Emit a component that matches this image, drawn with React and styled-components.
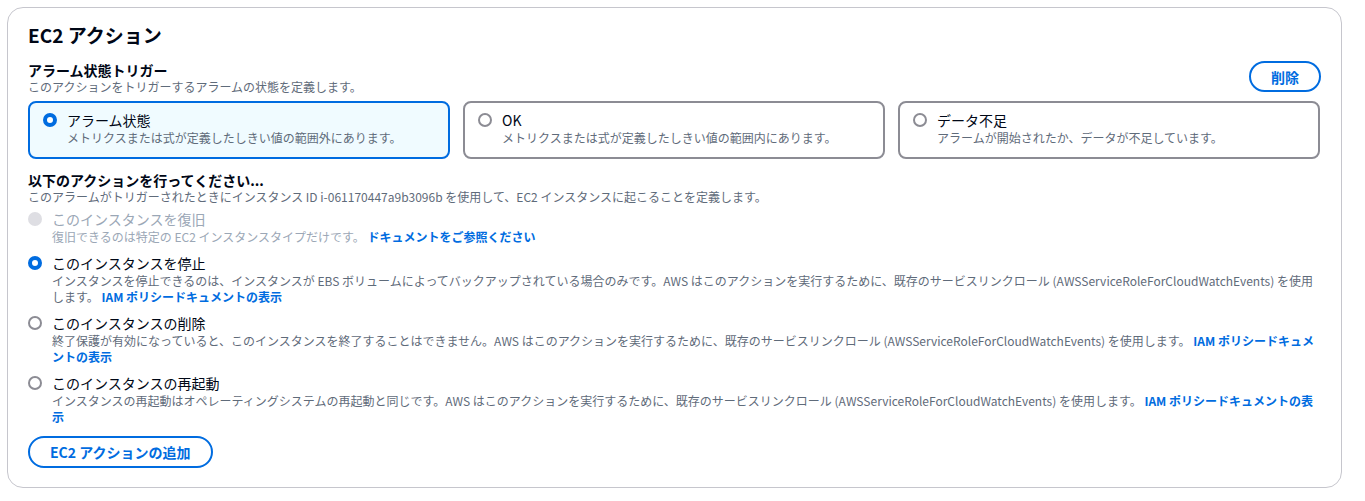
import React from "react";
import styled, { createGlobalStyle } from "styled-components";

const Global = createGlobalStyle`
  html, body { margin: 0; padding: 0; background: #ffffff; }
  body {
    font-family: "Noto Sans CJK JP", "Noto Sans", sans-serif;
    color: #000716;
    -webkit-font-smoothing: antialiased;
  }
`;

const Page = styled.div`
  padding: 7px 23px 12px 7px;
`;

const Card = styled.section`
  border: 1px solid #c6c6cd;
  border-radius: 16px;
  background: #fff;
  padding: 16px 20px 19px 20px;
`;

const Title = styled.h2`
  margin: 0;
  font-size: 19px;
  line-height: 22px;
  font-weight: 700;
`;

const SectionHead = styled.div`
  display: flex;
  align-items: flex-start;
  justify-content: space-between;
  margin-top: ${(p) => p.$mt || 0}px;
`;

const HeadText = styled.div`
  display: flex;
  flex-direction: column;
`;

const Label = styled.div`
  font-size: 14px;
  line-height: 18px;
  font-weight: 700;
`;

const Desc = styled.div`
  font-size: 12px;
  line-height: 16px;
  color: ${(p) => (p.$disabled ? "#9ba7b6" : "#5f6b7a")};
`;

const PillButton = styled.button`
  font-family: inherit;
  font-size: 14px;
  font-weight: 700;
  line-height: 18px;
  color: #006ce0;
  background: #fff;
  border: 2px solid #006ce0;
  border-radius: 20px;
  padding: 4px 20px;
  height: ${(p) => p.$h || 32}px;
  cursor: pointer;
`;

const Tiles = styled.div`
  display: grid;
  grid-template-columns: repeat(3, 1fr);
  gap: 13px;
  margin-top: 6px;
  margin-right: 1px;
`;

const Tile = styled.div`
  display: flex;
  align-items: flex-start;
  gap: 10px;
  border: 2px solid ${(p) => (p.$selected ? "#006ce0" : "#8c8c94")};
  background: ${(p) => (p.$selected ? "#f0fbff" : "#fff")};
  border-radius: 8px;
  padding: 7px 13px 11px 13px;
`;

const RadioDot = styled.span`
  flex: none;
  box-sizing: border-box;
  width: 14px;
  height: 14px;
  margin-top: ${(p) => p.$mt || 3}px;
  border-radius: 50%;
  background: ${(p) => (p.$disabled ? "#dedee3" : "#fff")};
  border: ${(p) =>
    p.$checked
      ? "4px solid #006ce0"
      : p.$disabled
      ? "none"
      : "2px solid #8c8c94"};
`;

const OptionBody = styled.div`
  display: flex;
  flex-direction: column;
  min-width: 0;
`;

const OptionLabel = styled.div`
  font-size: 14px;
  line-height: 20px;
  color: ${(p) => (p.$disabled ? "#9ba7b6" : "#000716")};
`;

const RadioList = styled.div`
  display: flex;
  flex-direction: column;
  gap: 8px;
  margin-top: 4px;
`;

const RadioRow = styled.div`
  display: flex;
  align-items: flex-start;
  gap: 10px;
`;

const Link = styled.a`
  color: #006ce0;
  font-weight: 700;
  text-decoration: none;
`;

const Footer = styled.div`
  margin-top: 11px;
`;

const tiles = [
  { label: "アラーム状態", desc: "メトリクスまたは式が定義したしきい値の範囲外にあります。", selected: true },
  { label: "OK", desc: "メトリクスまたは式が定義したしきい値の範囲内にあります。" },
  { label: "データ不足", desc: "アラームが開始されたか、データが不足しています。" },
];

const actions = [
  {
    label: "このインスタンスを復旧",
    disabled: true,
    desc: "復旧できるのは特定の EC2 インスタンスタイプだけです。 ",
    link: "ドキュメントをご参照ください",
  },
  {
    label: "このインスタンスを停止",
    checked: true,
    desc:
      "インスタンスを停止できるのは、インスタンスが EBS ボリュームによってバックアップされている場合のみです。AWS はこのアクションを実行するために、既存のサービスリンクロール (AWSServiceRoleForCloudWatchEvents) を使用します。 ",
    link: "IAM ポリシードキュメントの表示",
  },
  {
    label: "このインスタンスの削除",
    desc:
      "終了保護が有効になっていると、このインスタンスを終了することはできません。AWS はこのアクションを実行するために、既存のサービスリンクロール (AWSServiceRoleForCloudWatchEvents) を使用します。 ",
    link: "IAM ポリシードキュメントの表示",
  },
  {
    label: "このインスタンスの再起動",
    desc:
      "インスタンスの再起動はオペレーティングシステムの再起動と同じです。AWS はこのアクションを実行するために、既存のサービスリンクロール (AWSServiceRoleForCloudWatchEvents) を使用します。 ",
    link: "IAM ポリシードキュメントの表示",
  },
];

export default function App() {
  return (
    <Page>
      <Global />
      <Card>
        <Title>EC2 アクション</Title>
        <SectionHead $mt={15}>
          <HeadText>
            <Label>アラーム状態トリガー</Label>
            <Desc>このアクションをトリガーするアラームの状態を定義します。</Desc>
          </HeadText>
          <PillButton $h={31}>削除</PillButton>
        </SectionHead>
        <Tiles>
          {tiles.map((t) => (
            <Tile key={t.label} $selected={t.selected}>
              <RadioDot $checked={t.selected} />
              <OptionBody>
                <OptionLabel>{t.label}</OptionLabel>
                <Desc>{t.desc}</Desc>
              </OptionBody>
            </Tile>
          ))}
        </Tiles>
        <SectionHead $mt={12}>
          <HeadText>
            <Label>以下のアクションを行ってください...</Label>
            <Desc>
              このアラームがトリガーされたときにインスタンス ID i-061170447a9b3096b を使用して、EC2 インスタンスに起こることを定義します。
            </Desc>
          </HeadText>
        </SectionHead>
        <RadioList>
          {actions.map((a) => (
            <RadioRow key={a.label}>
              <RadioDot $checked={a.checked} $disabled={a.disabled} />
              <OptionBody>
                <OptionLabel $disabled={a.disabled}>{a.label}</OptionLabel>
                <Desc $disabled={a.disabled}>
                  {a.desc}
                  <Link href="#">{a.link}</Link>
                </Desc>
              </OptionBody>
            </RadioRow>
          ))}
        </RadioList>
        <Footer>
          <PillButton>EC2 アクションの追加</PillButton>
        </Footer>
      </Card>
    </Page>
  );
}
